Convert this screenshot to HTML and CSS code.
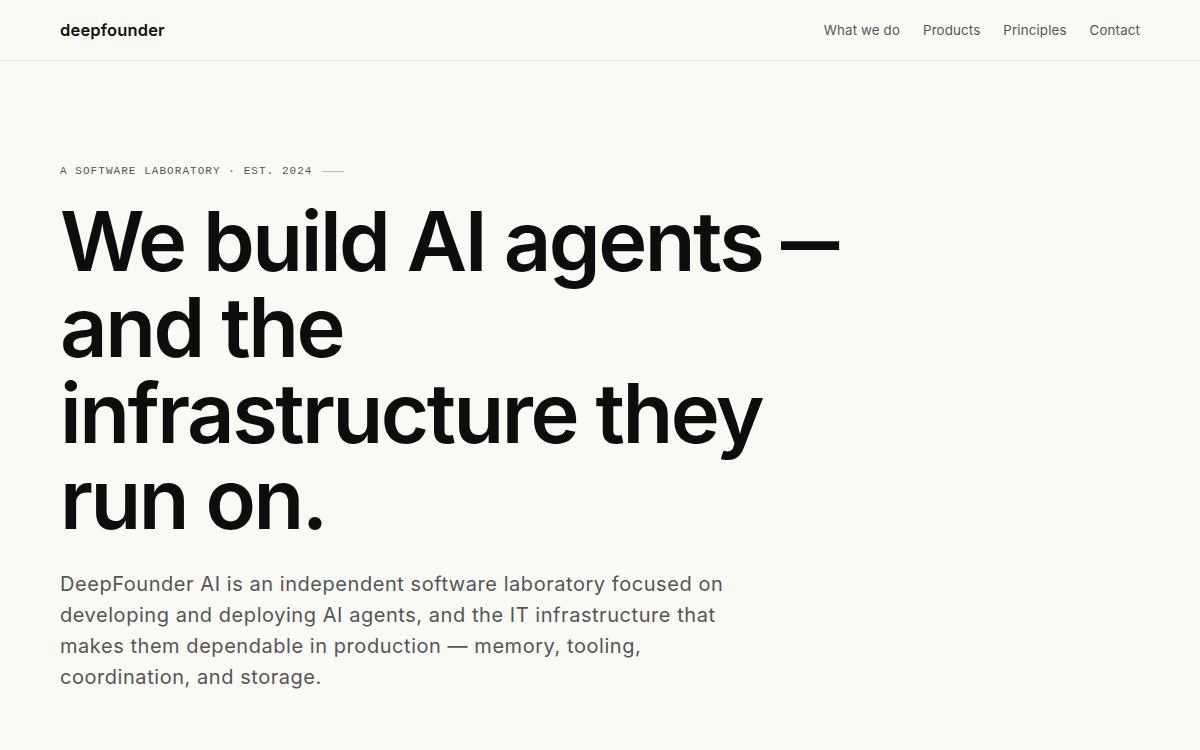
FILE: index.html
```html
<!DOCTYPE html>
<html lang="en">
<head>
<meta charset="utf-8">
<title>deepfounder</title>
<link rel="stylesheet" href="styles.css">
</head>
<body>
<header class="site-header">
  <a class="logo" href="#">deepfounder</a>
  <nav class="nav">
    <a href="#">What we do</a>
    <a href="#">Products</a>
    <a href="#">Principles</a>
    <a href="#">Contact</a>
  </nav>
</header>
<main class="hero">
  <p class="eyebrow"><span>A SOFTWARE LABORATORY · EST. 2024</span><span class="rule"></span></p>
  <h1 class="headline">We build AI agents <span class="dash">—</span><br>and the<br>infrastructure they<br>run on.</h1>
  <p class="lede">DeepFounder AI is an independent software laboratory focused on<br>developing and deploying AI agents, and the IT infrastructure that<br>makes them dependable in production — memory, tooling,<br>coordination, and storage.</p>
</main>
</body>
</html>
```
FILE: styles.css
```css
* { box-sizing: border-box; }
html, body { margin: 0; padding: 0; }
body {
  background: #fafaf5;
  color: #111;
  font-family: Inter, "Noto Sans", sans-serif;
}
a { color: inherit; text-decoration: none; }
.site-header {
  height: 61px;
  border-bottom: 1px solid #e4e4df;
  display: flex;
  align-items: center;
  justify-content: space-between;
  padding: 0 60px;
}
.logo {
  font-size: 16.5px;
  font-weight: 600;
  letter-spacing: 0.01em;
  color: #111;
}
.nav {
  display: flex;
  gap: 23px;
}
.nav a {
  font-size: 13.3px;
  letter-spacing: 0.15px;
  color: #555;
}
.hero {
  padding: 104px 60px 0;
}
.eyebrow {
  margin: 0;
  display: flex;
  align-items: center;
  gap: 9px;
  font-family: "Liberation Mono", "DejaVu Sans Mono", monospace;
  font-size: 11px;
  letter-spacing: 1.05px;
  color: #555;
}
.eyebrow .rule {
  display: block;
  width: 22px;
  height: 1px;
  background: #bbb;
}
.headline {
  margin: 21px 0 0;
  font-size: 83px;
  line-height: 86px;
  font-weight: 600;
  letter-spacing: -0.03em;
  color: #0d0d0d;
}
.headline .dash {
  display: inline-block;
  transform: scaleX(0.7);
  transform-origin: left center;
  margin-right: -24px;
}
.lede {
  margin: 27px 0 0;
  font-size: 20px;
  line-height: 31px;
  letter-spacing: 0.55px;
  color: #555;
  font-weight: 400;
}
```
